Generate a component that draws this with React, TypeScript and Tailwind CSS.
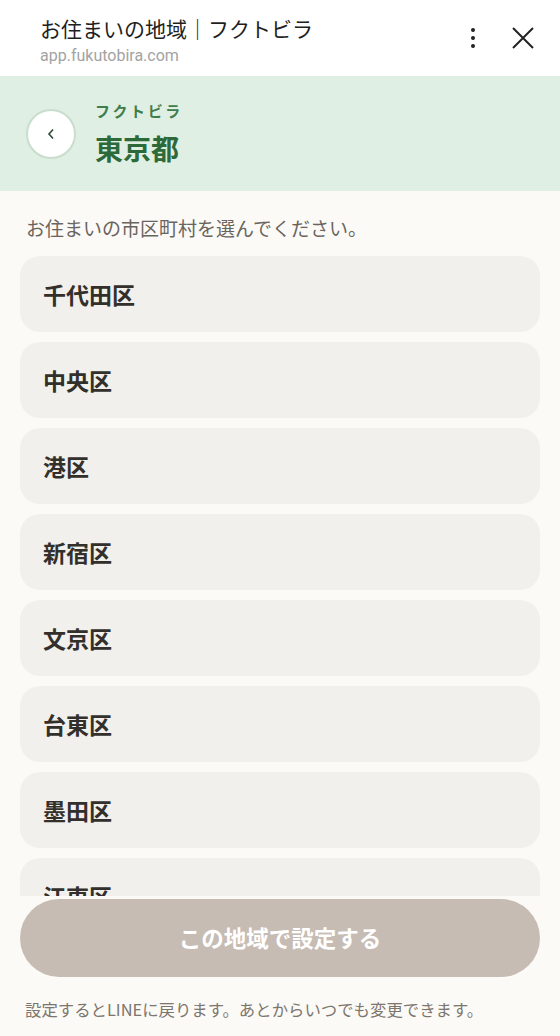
import React from 'react';

const wards = ['千代田区', '中央区', '港区', '新宿区', '文京区', '台東区', '墨田区', '江東区', '品川区'];

export default function App() {
  return (
    <div
      className="flex h-[1036px] w-[560px] flex-col overflow-hidden bg-[#fbfaf6]"
      style={{ fontFamily: '"Noto Sans CJK JP", "Noto Sans", sans-serif' }}
    >
      {/* Browser chrome */}
      <div className="flex h-[76px] shrink-0 items-center bg-white pl-[40px] pr-[26px]">
        <div className="flex-1 min-w-0 pt-[4px]">
          <div className="text-[21px] leading-[26px] text-[#1f1f1f]">お住まいの地域｜フクトビラ</div>
          <div
            className="mt-[5px] text-[16px] leading-[20px] text-[#a3a3a3]"
            style={{ fontFamily: 'Roboto, "Noto Sans", sans-serif' }}
          >
            app.fukutobira.com
          </div>
        </div>
        <div className="flex items-center gap-[36px]">
          <svg width="6" height="22" viewBox="0 0 6 22" fill="#222">
            <circle cx="3" cy="3" r="2" />
            <circle cx="3" cy="11" r="2" />
            <circle cx="3" cy="19" r="2" />
          </svg>
          <svg width="22" height="22" viewBox="0 0 22 22" stroke="#222" strokeWidth="2" fill="none">
            <path d="M1 1 L21 21 M21 1 L1 21" />
          </svg>
        </div>
      </div>

      {/* Region header */}
      <div className="flex h-[115px] shrink-0 items-center gap-[19px] bg-[#e0efe3] px-[26px]">
        <button className="flex h-[50px] w-[50px] items-center justify-center rounded-full border-2 border-[#c9ddcd] bg-white">
          <svg width="8" height="12" viewBox="0 0 8 12" fill="none" stroke="#2f4a36" strokeWidth="1.6">
            <path d="M6 1.5 L2 6 L6 10.5" />
          </svg>
        </button>
        <div className="mt-[1px]">
          <div className="text-[15px] font-bold leading-[20px] tracking-[0.17em] text-[#3f7d4c]">フクトビラ</div>
          <div className="mt-[8px] text-[28px] font-bold leading-[38px] text-[#2d6a3a]">東京都</div>
        </div>
      </div>

      {/* Ward list */}
      <div className="flex-1 min-h-0 overflow-hidden px-[20px] pt-[24px]">
        <p className="mb-[15px] pl-[6px] text-[19px] leading-[26px] text-[#6a645e]">お住まいの市区町村を選んでください。</p>
        <div className="flex flex-col gap-[10px]">
          {wards.map((w) => (
            <div
              key={w}
              className="flex h-[76px] shrink-0 items-center rounded-[20px] bg-[#f2f0ec] px-[23px] text-[23px] font-bold text-[#33302c]"
            >
              {w}
            </div>
          ))}
        </div>
      </div>

      {/* Footer action */}
      <div className="h-[140px] shrink-0 bg-[#fbfaf6] px-[20px] pt-[3px]">
        <button className="flex h-[78px] w-full items-center justify-center rounded-full bg-[#c6bcb3] text-[22.5px] font-bold text-white">
          この地域で設定する
        </button>
        <p className="mt-[21px] pl-[5px] text-[16.4px] leading-[22px] text-[#7d766f]">
          設定するとLINEに戻ります。あとからいつでも変更できます。
        </p>
      </div>
    </div>
  );
}
